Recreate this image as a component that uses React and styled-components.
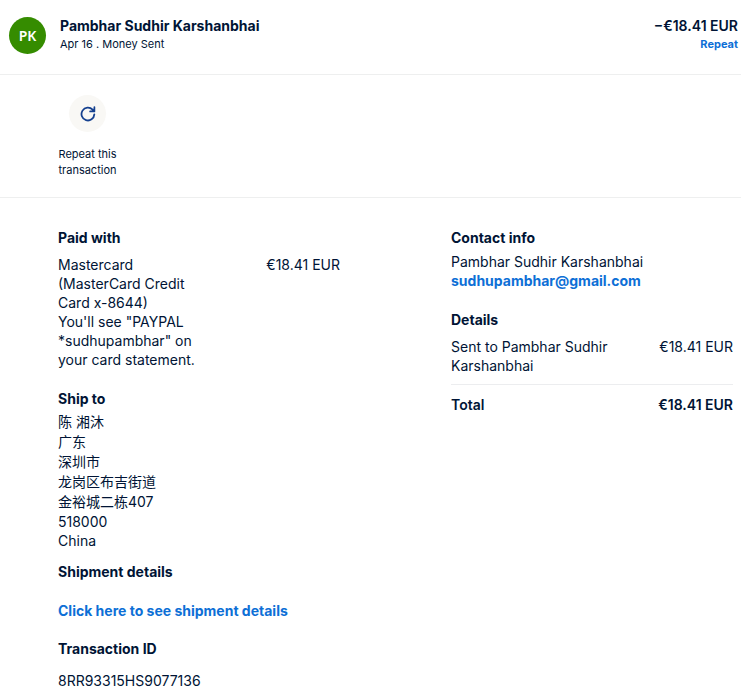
import React from "react";
import styled, { createGlobalStyle } from "styled-components";

const GlobalStyle = createGlobalStyle`
  * { box-sizing: border-box; }
  body {
    margin: 0;
    background: #fff;
    color: #001435;
    font-family: Inter, "Noto Sans CJK SC", sans-serif;
    font-size: 14px;
    line-height: 19px;
  }
`;

const Header = styled.header`
  display: flex;
  align-items: flex-start;
  padding: 17px 3px 20px 9px;
  border-bottom: 1px solid #eeefef;
`;

const Avatar = styled.div`
  display: grid;
  place-items: center;
  width: 37px;
  height: 37px;
  margin-right: 14px;
  border-radius: 50%;
  background: #358c00;
  color: #fff;
  font-family: "Noto Sans", sans-serif;
  font-weight: 600;
`;

const Party = styled.div`
  flex: 1;
`;

const Name = styled.h1`
  margin: 0;
  font-size: 14px;
  font-weight: 700;
  line-height: 18px;
`;

const Meta = styled.p`
  margin: 0;
  font-size: 11px;
  line-height: 18px;
`;

const Summary = styled.div`
  text-align: right;
`;

const HeaderAmount = styled.div`
  font-weight: 600;
  line-height: 18px;
`;

const TextButton = styled.button`
  display: block;
  margin-left: auto;
  padding: 0;
  border: 0;
  background: none;
  color: #0d6fd6;
  font: inherit;
  font-size: 11px;
  font-weight: 700;
  line-height: 18px;
  cursor: pointer;
`;

const Actions = styled.section`
  padding: 20px 50px 19px;
  border-bottom: 1px solid #eeefef;
`;

const RepeatButton = styled.button`
  display: flex;
  flex-direction: column;
  align-items: center;
  gap: 14px;
  width: 75px;
  padding: 0;
  border: 0;
  background: none;
  color: inherit;
  font: inherit;
  font-size: 11px;
  line-height: 16px;
  cursor: pointer;
`;

const IconDisc = styled.span`
  display: grid;
  place-items: center;
  width: 37px;
  height: 37px;
  border-radius: 50%;
  background: #f9f8f5;
  color: #15408f;
`;

const Body = styled.main`
  display: grid;
  grid-template-columns: 1fr 1fr;
  gap: 111px;
  padding: 30px 8px 6px 58px;
`;

const Section = styled.section`
  margin-bottom: ${(p) => p.$after || 0}px;
`;

const Heading = styled.h2`
  margin: 0 0 ${(p) => p.$gap}px;
  font-size: 14px;
  font-weight: 700;
  line-height: 19px;
`;

const Text = styled.p`
  margin: 0;
`;

const Line = styled.span`
  display: block;
  line-height: ${(p) => (p.$tall ? 20 : 19)}px;
`;

const Link = styled.a`
  color: #0d6fd6;
  font-weight: 700;
  text-decoration: none;
`;

const AmountRow = styled.div`
  display: flex;
  justify-content: space-between;
  align-items: flex-start;
  font-weight: ${(p) => (p.$total ? 600 : 400)};
  ${(p) => p.$total && "margin-top: 9px; padding-top: 10px; border-top: 1px solid #ecedef;"}
`;

const Label = styled.div`
  width: ${(p) => p.$share || "auto"};
`;

const Amount = styled.div`
  white-space: nowrap;
`;

function RepeatIcon() {
  return (
    <svg width="16" height="16" viewBox="0 0 16 16" fill="none" aria-hidden="true">
      <path d="M14.3 8.4A6.4 6.4 0 1 1 12.6 3.7" stroke="currentColor" strokeWidth="1.8" strokeLinecap="round" />
      <path d="M14.4 1.1V5.4H10.1" stroke="currentColor" strokeWidth="1.7" strokeLinecap="round" strokeLinejoin="round" />
      <path d="M14.4 2V5.4H11Z" fill="currentColor" />
    </svg>
  );
}

const address = ["陈 湘沐", "广东", "深圳市", "龙岗区布吉街道", "金裕城二栋407"];

export default function App() {
  return (
    <>
      <GlobalStyle />
      <Header>
        <Avatar>PK</Avatar>
        <Party>
          <Name>Pambhar Sudhir Karshanbhai</Name>
          <Meta>Apr 16 . Money Sent</Meta>
        </Party>
        <Summary>
          <HeaderAmount>−€18.41 EUR</HeaderAmount>
          <TextButton type="button">Repeat</TextButton>
        </Summary>
      </Header>
      <Actions>
        <RepeatButton type="button">
          <IconDisc>
            <RepeatIcon />
          </IconDisc>
          <span>Repeat this transaction</span>
        </RepeatButton>
      </Actions>
      <Body>
        <div>
          <Section $after={20}>
            <Heading $gap={8}>Paid with</Heading>
            <AmountRow>
              <Label $share="50%">
                <Text>Mastercard (MasterCard Credit Card x-8644)</Text>
                <Text>You'll see "PAYPAL *sudhupambhar" on your card statement.</Text>
              </Label>
              <Amount>€18.41 EUR</Amount>
            </AmountRow>
          </Section>
          <Section $after={12}>
            <Heading $gap={4}>Ship to</Heading>
            {address.map((line) => (
              <Line key={line} $tall>
                {line}
              </Line>
            ))}
            <Line>518000</Line>
            <Line>China</Line>
          </Section>
          <Section $after={19}>
            <Heading $gap={20}>Shipment details</Heading>
            <Text>
              <Link href="#shipment">Click here to see shipment details</Link>
            </Text>
          </Section>
          <Section>
            <Heading $gap={13}>Transaction ID</Heading>
            <Text>8RR93315HS9077136</Text>
          </Section>
        </div>
        <div>
          <Section $after={20}>
            <Heading $gap={5}>Contact info</Heading>
            <Text>Pambhar Sudhir Karshanbhai</Text>
            <Text>
              <Link href="mailto:sudhupambhar@gmail.com">sudhupambhar@gmail.com</Link>
            </Text>
          </Section>
          <Section>
            <Heading $gap={8}>Details</Heading>
            <AmountRow>
              <Label $share="60%">Sent to Pambhar Sudhir Karshanbhai</Label>
              <Amount>€18.41 EUR</Amount>
            </AmountRow>
            <AmountRow $total>
              <Label>Total</Label>
              <Amount>€18.41 EUR</Amount>
            </AmountRow>
          </Section>
        </div>
      </Body>
    </>
  );
}
